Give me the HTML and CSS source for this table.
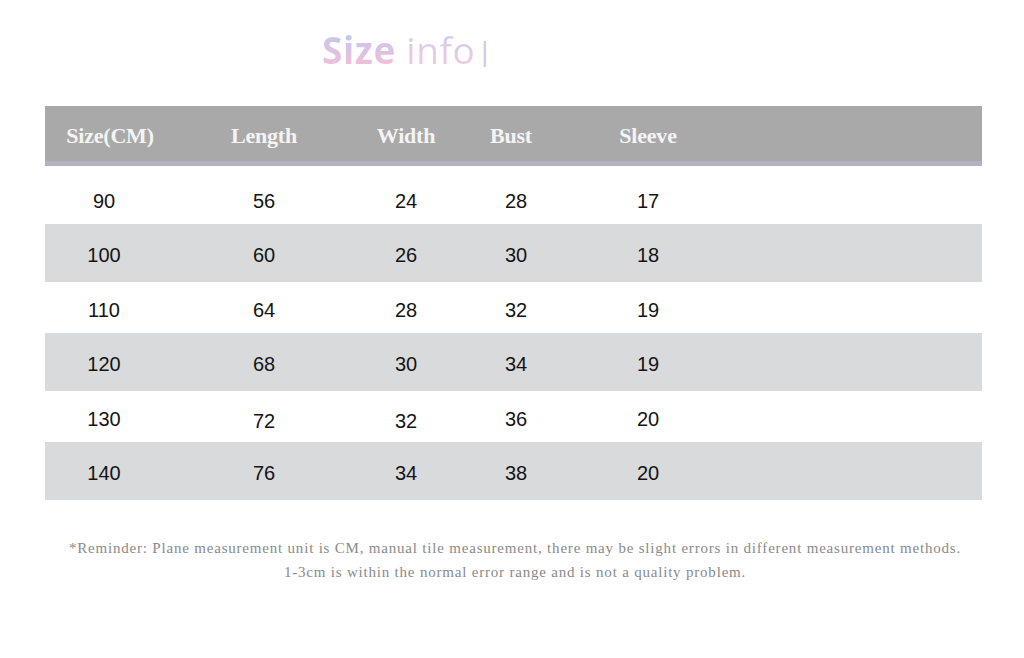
FILE: index.html
```html
<!DOCTYPE html>
<html>
<head>
<meta charset="utf-8">
<link rel="stylesheet" href="styles.css">
</head>
<body>
<div class="page">
  <h1 class="title"><span class="title-bold">Size</span> <span class="title-light">info</span><span class="title-bar">|</span></h1>
  <div class="table">
    <div class="row head">
      <div class="c c1 h1">Size(CM)</div>
      <div class="c c2">Length</div>
      <div class="c c3">Width</div>
      <div class="c c4 h4">Bust</div>
      <div class="c c5">Sleeve</div>
    </div>
    <div class="row r-tall first"><div class="c c1">90</div><div class="c c2">56</div><div class="c c3">24</div><div class="c c4">28</div><div class="c c5">17</div></div>
    <div class="row r-tall gray"><div class="c c1">100</div><div class="c c2">60</div><div class="c c3">26</div><div class="c c4">30</div><div class="c c5">18</div></div>
    <div class="row r-short"><div class="c c1">110</div><div class="c c2">64</div><div class="c c3">28</div><div class="c c4">32</div><div class="c c5">19</div></div>
    <div class="row r-tall gray"><div class="c c1">120</div><div class="c c2">68</div><div class="c c3">30</div><div class="c c4">34</div><div class="c c5">19</div></div>
    <div class="row r-short"><div class="c c1">130</div><div class="c c2 low">72</div><div class="c c3 low">32</div><div class="c c4">36</div><div class="c c5">20</div></div>
    <div class="row r-tall gray"><div class="c c1">140</div><div class="c c2">76</div><div class="c c3">34</div><div class="c c4">38</div><div class="c c5">20</div></div>
  </div>
  <p class="note">*Reminder: Plane measurement unit is CM, manual tile measurement, there may be slight errors in different measurement methods.<br>1-3cm is within the normal error range and is not a quality problem.</p>
</div>
</body>
</html>
```

FILE: styles.css
```css
html, body {
  margin: 0;
  padding: 0;
  background: #ffffff;
}

.page {
  width: 1024px;
  height: 658px;
  overflow: hidden;
}

.title {
  margin: 0;
  height: 106px;
  box-sizing: border-box;
  padding: 27px 0 0 322px;
  font-family: "Open Sans", sans-serif;
  font-size: 37px;
  line-height: 46px;
  letter-spacing: 0.6px;
}

.title-bold,
.title-light {
  background: linear-gradient(180deg, #c2c8f0 20%, #dcc2e4 50%, #f2bed6 85%);
  -webkit-background-clip: text;
  background-clip: text;
  color: transparent;
}

.title-bold {
  font-weight: 700;
}

.title-light {
  font-weight: 400;
  opacity: 0.85;
}

.title-bar {
  font-family: "Liberation Sans", sans-serif;
  font-weight: 400;
  font-size: 27px;
  margin-left: 6px;
  position: relative;
  top: -3px;
  color: #d4c8e6;
}

.table {
  margin-left: 45px;
  width: 937px;
}

.row {
  display: grid;
  grid-template-columns: 118px 202px 82px 138px 126px 1fr;
  align-items: center;
  font-family: "Liberation Sans", Arial, sans-serif;
  font-size: 20px;
  color: #141414;
  box-sizing: border-box;
  padding-top: 5px;
}

.c {
  text-align: center;
}

.head {
  height: 60px;
  padding-top: 4px;
  background: #a9a9a9;
  border-bottom: 5px solid #b3b2c2;
  font-family: "Liberation Serif", serif;
  font-weight: 700;
  font-size: 22px;
  color: #f4f4f4;
  letter-spacing: -0.2px;
}

.h1 {
  position: relative;
  left: 6px;
}

.h4 {
  position: relative;
  left: -5px;
}

.r-tall {
  height: 58px;
}

.r-short {
  height: 51px;
}

.first {
  padding-top: 12px;
}

.gray {
  background: #d9dadc;
}

.low {
  padding-top: 4px;
}

.note {
  margin: 36px 0 0 0;
  width: 1030px;
  text-align: center;
  font-family: "Liberation Serif", serif;
  font-size: 15px;
  line-height: 24px;
  letter-spacing: 0.8px;
  color: #8a8a8a;
}
```
